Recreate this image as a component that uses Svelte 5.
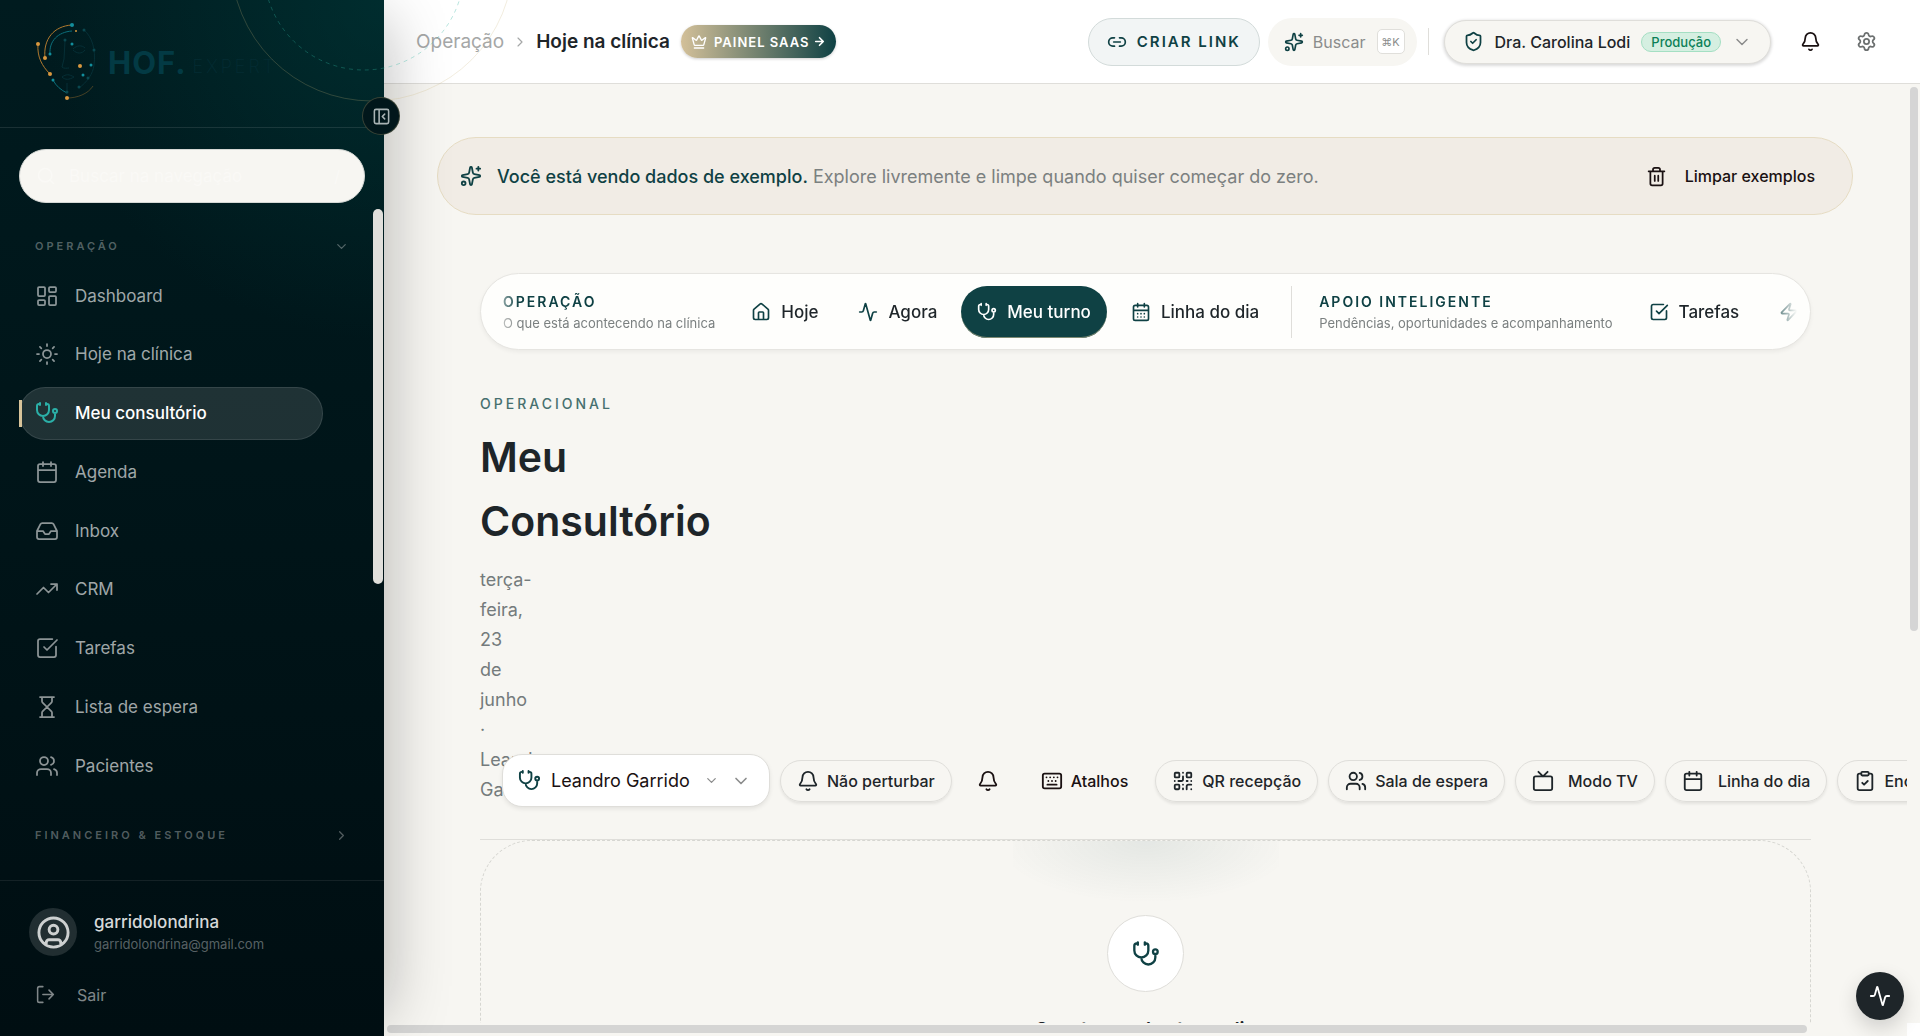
<script lang="ts">
  type IconName = keyof typeof icons;

  const icons = {
    dashboard: 'M4 3h5a1 1 0 0 1 1 1v7a1 1 0 0 1-1 1H4a1 1 0 0 1-1-1V4a1 1 0 0 1 1-1zM15 3h5a1 1 0 0 1 1 1v3a1 1 0 0 1-1 1h-5a1 1 0 0 1-1-1V4a1 1 0 0 1 1-1zM15 12h5a1 1 0 0 1 1 1v7a1 1 0 0 1-1 1h-5a1 1 0 0 1-1-1v-7a1 1 0 0 1 1-1zM4 16h5a1 1 0 0 1 1 1v3a1 1 0 0 1-1 1H4a1 1 0 0 1-1-1v-3a1 1 0 0 1 1-1z',
    sun: 'M8 12a4 4 0 1 0 8 0a4 4 0 1 0-8 0M12 2v2M12 20v2M4.93 4.93l1.41 1.41M17.66 17.66l1.41 1.41M2 12h2M20 12h2M6.34 17.66l-1.41 1.41M19.07 4.93l-1.41 1.41',
    stethoscope: 'M11 2v2M5 2v2M5 3H4a2 2 0 0 0-2 2v4a6 6 0 0 0 12 0V5a2 2 0 0 0-2-2h-1M8 15a6 6 0 0 0 12 0v-3M18 10a2 2 0 1 0 4 0a2 2 0 1 0-4 0',
    calendar: 'M8 2v4M16 2v4M5 4h14a2 2 0 0 1 2 2v14a2 2 0 0 1-2 2H5a2 2 0 0 1-2-2V6a2 2 0 0 1 2-2zM3 10h18',
    calendarDays: 'M8 2v4M16 2v4M5 4h14a2 2 0 0 1 2 2v14a2 2 0 0 1-2 2H5a2 2 0 0 1-2-2V6a2 2 0 0 1 2-2zM3 10h18M8 14h.01M12 14h.01M16 14h.01M8 18h.01M12 18h.01M16 18h.01',
    inbox: 'M22 12h-6l-2 3h-4l-2-3H2M5.45 5.11L2 12v6a2 2 0 0 0 2 2h16a2 2 0 0 0 2-2v-6l-3.45-6.89A2 2 0 0 0 16.76 4H7.24a2 2 0 0 0-1.79 1.11z',
    trending: 'M16 7h6v6M22 7l-8.5 8.5-5-5L2 17',
    check: 'M21 10.656V19a2 2 0 0 1-2 2H5a2 2 0 0 1-2-2V5a2 2 0 0 1 2-2h12.344M9 11l3 3L22 4',
    hourglass: 'M5 22h14M5 2h14M17 22v-4.172a2 2 0 0 0-.586-1.414L12 12l-4.414 4.414A2 2 0 0 0 7 17.828V22M7 2v4.172a2 2 0 0 0 .586 1.414L12 12l4.414-4.414A2 2 0 0 0 17 6.172V2',
    users: 'M16 21v-2a4 4 0 0 0-4-4H6a4 4 0 0 0-4 4v2M16 3.128a4 4 0 0 1 0 7.744M22 21v-2a4 4 0 0 0-3-3.87M5 7a4 4 0 1 0 8 0a4 4 0 1 0-8 0',
    user: 'M2 12a10 10 0 1 0 20 0a10 10 0 1 0-20 0M9 10a3 3 0 1 0 6 0a3 3 0 1 0-6 0M7 20.662V19a2 2 0 0 1 2-2h6a2 2 0 0 1 2 2v1.662',
    logout: 'M16 17l5-5-5-5M21 12H9M9 21H5a2 2 0 0 1-2-2V5a2 2 0 0 1 2-2h4',
    panel: 'M5 3h14a2 2 0 0 1 2 2v14a2 2 0 0 1-2 2H5a2 2 0 0 1-2-2V5a2 2 0 0 1 2-2zM9 3v18M16 15l-3-3 3-3',
    search: 'M3 11a8 8 0 1 0 16 0a8 8 0 1 0-16 0M21 21l-4.3-4.3',
    down: 'M6 9l6 6 6-6',
    right: 'M9 18l6-6-6-6',
    arrow: 'M5 12h14M12 5l7 7-7 7',
    crown: 'M11.562 3.266a.5.5 0 0 1 .876 0L15.39 8.87a1 1 0 0 0 1.516.294L21.183 5.5a.5.5 0 0 1 .798.519l-2.834 10.246a1 1 0 0 1-.956.734H5.81a1 1 0 0 1-.957-.734L2.02 6.02a.5.5 0 0 1 .798-.519l4.276 3.664a1 1 0 0 0 1.516-.294zM5 21h14',
    link: 'M9 17H7A5 5 0 0 1 7 7h2M15 7h2a5 5 0 1 1 0 10h-2M8 12h8',
    sparkles: 'M11.017 2.814a1 1 0 0 1 1.966 0l1.051 5.558a2 2 0 0 0 1.594 1.594l5.558 1.051a1 1 0 0 1 0 1.966l-5.558 1.051a2 2 0 0 0-1.594 1.594l-1.051 5.558a1 1 0 0 1-1.966 0l-1.051-5.558a2 2 0 0 0-1.594-1.594l-5.558-1.051a1 1 0 0 1 0-1.966l5.558-1.051a2 2 0 0 0 1.594-1.594zM20 2v4M22 4h-4M2 20a2 2 0 1 0 4 0a2 2 0 1 0-4 0',
    shield: 'M20 13c0 5-3.5 7.5-7.66 8.95a1 1 0 0 1-.67-.01C7.5 20.5 4 18 4 13V6a1 1 0 0 1 1-1c2 0 4.5-1.2 6.24-2.72a1.17 1.17 0 0 1 1.52 0C14.51 3.81 17 5 19 5a1 1 0 0 1 1 1zM9 12l2 2 4-4',
    bell: 'M10.268 21a2 2 0 0 0 3.464 0M3.262 15.326A1 1 0 0 0 4 17h16a1 1 0 0 0 .74-1.673C19.41 13.956 18 12.499 18 8A6 6 0 0 0 6 8c0 4.499-1.411 5.956-2.738 7.326',
    settings: 'M9.671 4.136a2.34 2.34 0 0 1 4.659 0 2.34 2.34 0 0 0 3.319 1.915 2.34 2.34 0 0 1 2.33 4.033 2.34 2.34 0 0 0 0 3.831 2.34 2.34 0 0 1-2.33 4.033 2.34 2.34 0 0 0-3.319 1.915 2.34 2.34 0 0 1-4.659 0 2.34 2.34 0 0 0-3.32-1.915 2.34 2.34 0 0 1-2.33-4.033 2.34 2.34 0 0 0 0-3.831A2.34 2.34 0 0 1 6.35 6.051a2.34 2.34 0 0 0 3.319-1.915M9 12a3 3 0 1 0 6 0a3 3 0 1 0-6 0',
    trash: 'M10 11v6M14 11v6M19 6v14a2 2 0 0 1-2 2H7a2 2 0 0 1-2-2V6M3 6h18M8 6V4a2 2 0 0 1 2-2h4a2 2 0 0 1 2 2v2',
    house: 'M15 21v-8a1 1 0 0 0-1-1h-4a1 1 0 0 0-1 1v8M3 10a2 2 0 0 1 .709-1.528l7-6a2 2 0 0 1 2.582 0l7 6A2 2 0 0 1 21 10v9a2 2 0 0 1-2 2H5a2 2 0 0 1-2-2z',
    activity: 'M22 12h-2.48a2 2 0 0 0-1.93 1.46l-2.35 8.36a.25.25 0 0 1-.48 0L9.24 2.18a.25.25 0 0 0-.48 0l-2.35 8.36A2 2 0 0 1 4.49 12H2',
    zap: 'M4 14a1 1 0 0 1-.78-1.63l9.9-10.2a.5.5 0 0 1 .86.46l-1.92 6.02A1 1 0 0 0 13 10h7a1 1 0 0 1 .78 1.63l-9.9 10.2a.5.5 0 0 1-.86-.46l1.92-6.02A1 1 0 0 0 11 14z',
    keyboard: 'M4 4h16a2 2 0 0 1 2 2v12a2 2 0 0 1-2 2H4a2 2 0 0 1-2-2V6a2 2 0 0 1 2-2zM6 8h.01M10 8h.01M14 8h.01M18 8h.01M8 12h.01M12 12h.01M16 12h.01M7 16h10',
    qr: 'M4 3h3a1 1 0 0 1 1 1v3a1 1 0 0 1-1 1H4a1 1 0 0 1-1-1V4a1 1 0 0 1 1-1zM17 3h3a1 1 0 0 1 1 1v3a1 1 0 0 1-1 1h-3a1 1 0 0 1-1-1V4a1 1 0 0 1 1-1zM4 16h3a1 1 0 0 1 1 1v3a1 1 0 0 1-1 1H4a1 1 0 0 1-1-1v-3a1 1 0 0 1 1-1zM21 16h-3a2 2 0 0 0-2 2v3M21 21v.01M12 7v3a2 2 0 0 1-2 2H7M3 12h.01M12 3h.01M12 16v.01M16 12h1M21 12v.01M12 21v-1',
    tv: 'M17 2l-5 5-5-5M4 7h16a2 2 0 0 1 2 2v11a2 2 0 0 1-2 2H4a2 2 0 0 1-2-2V9a2 2 0 0 1 2-2z',
    clipboard: 'M9 2h6a1 1 0 0 1 1 1v2a1 1 0 0 1-1 1H9a1 1 0 0 1-1-1V3a1 1 0 0 1 1-1zM16 4h2a2 2 0 0 1 2 2v14a2 2 0 0 1-2 2H6a2 2 0 0 1-2-2V6a2 2 0 0 1 2-2h2M9 14l2 2 4-4',
  };

  const navItems: { label: string; icon: IconName }[] = [
    { label: 'Dashboard', icon: 'dashboard' },
    { label: 'Hoje na clínica', icon: 'sun' },
    { label: 'Meu consultório', icon: 'stethoscope' },
    { label: 'Agenda', icon: 'calendar' },
    { label: 'Inbox', icon: 'inbox' },
    { label: 'CRM', icon: 'trending' },
    { label: 'Tarefas', icon: 'check' },
    { label: 'Lista de espera', icon: 'hourglass' },
    { label: 'Pacientes', icon: 'users' },
  ];

  const tabs: { label: string; icon: IconName }[] = [
    { label: 'Hoje', icon: 'house' },
    { label: 'Agora', icon: 'activity' },
    { label: 'Meu turno', icon: 'stethoscope' },
    { label: 'Linha do dia', icon: 'calendarDays' },
  ];

  const supportTabs: { label: string; icon: IconName }[] = [
    { label: 'Tarefas', icon: 'check' },
    { label: 'Oportunidades', icon: 'zap' },
  ];

  const actions: { label: string; icon: IconName; kind: string }[] = [
    { label: 'Não perturbar', icon: 'bell', kind: 'outline' },
    { label: '', icon: 'bell', kind: 'bare' },
    { label: 'Atalhos', icon: 'keyboard', kind: 'ghost' },
    { label: 'QR recepção', icon: 'qr', kind: 'outline' },
    { label: 'Sala de espera', icon: 'users', kind: 'outline' },
    { label: 'Modo TV', icon: 'tv', kind: 'outline wide' },
    { label: 'Linha do dia', icon: 'calendar', kind: 'outline wide' },
    { label: 'Encerrar turno', icon: 'clipboard', kind: 'outline' },
  ];

  let activeNav = $state('Meu consultório');
  let activeTab = $state('Meu turno');
  let query = $state('');
</script>

{#snippet icon(name: IconName, size = 20, stroke = 2)}
  <svg class="icon" width={size} height={size} viewBox="0 0 24 24" stroke-width={stroke} aria-hidden="true">
    <path d={icons[name]} />
  </svg>
{/snippet}

{#snippet tab(item: { label: string; icon: IconName })}
  <button class="tab" class:active={item.label === activeTab} onclick={() => (activeTab = item.label)}>
    {@render icon(item.icon, 20, 2)}
    {item.label}
  </button>
{/snippet}

<div class="app">
  <aside class="sidebar">
    <svg class="orbits" width="320" height="120" viewBox="0 0 320 120" aria-hidden="true">
      <circle cx="156" cy="-40" r="141" stroke="#c9b27a" stroke-opacity="0.24" />
      <circle cx="148" cy="-30" r="100" stroke="#2fb39f" stroke-opacity="0.34" stroke-dasharray="4 4" />
    </svg>

    <div class="brand">
      <svg class="face" width="64" height="80" viewBox="0 0 64 80" aria-hidden="true">
        <g stroke="#b0792e">
          <path d="M37 3C19 4 8 17 10 36" />
          <path d="M3 22C2 35 7 44 15 52" />
          <path d="M32 76C42 76 53 72 58 64" opacity="0.4" />
        </g>
        <g stroke="#0c6f7b">
          <path d="M37 9C23 10 14 19 15 32" />
          <path d="M18 58C21 64 26 68 32 71" />
        </g>
        <g stroke="#062f36">
          <path d="M49 8C57 15 61 27 59 43C58 52 52 60 44 66" />
          <path d="M38 28C42 32 47 32 50 28M38 27C42 23 47 23 50 26" />
          <path d="M30 19L29 37L27 45C29 47 32 46 34 46" />
          <path d="M27 55C31 52 34 52 39 55C34 58 30 58 27 55M32 61V70" />
        </g>
        <g fill="#d9983f" stroke="none">
          <circle cx="3" cy="22" r="2" /><circle cx="10" cy="36" r="2" />
          <circle cx="15" cy="52" r="2" /><circle cx="32" cy="76" r="2" />
          <circle cx="45" cy="44" r="2" /><circle cx="41" cy="9" r="1" />
        </g>
        <g fill="#128e9c" stroke="none">
          <circle cx="37" cy="3" r="2" /><circle cx="37" cy="22" r="1.5" />
          <circle cx="15" cy="32" r="1.5" /><circle cx="18" cy="58" r="1.5" />
          <circle cx="56" cy="43" r="1.5" /><circle cx="48" cy="53" r="1.5" />
        </g>
        <g fill="#0a474f" stroke="none">
          <circle cx="49" cy="8" r="1.5" /><circle cx="59" cy="28" r="1.5" />
          <circle cx="30" cy="18" r="1.5" /><circle cx="53" cy="56" r="1.5" />
          <circle cx="44" cy="65" r="1.5" /><circle cx="32" cy="70" r="1.5" />
        </g>
      </svg>
      <span class="wordmark">HOF.</span>
      <span class="submark">EXPERT</span>
    </div>

    <button class="collapse" aria-label="Recolher menu">{@render icon('panel', 19, 2)}</button>

    <label class="nav-search">
      {@render icon('search', 20, 1.75)}
      <input type="text" placeholder="Buscar na navegação" aria-label="Buscar na navegação" bind:value={query} />
      <span>/</span>
    </label>

    <div class="nav-area">
      <button class="section">OPERAÇÃO {@render icon('down', 15, 2)}</button>
      <nav>
        {#each navItems as item}
          <a
            href="#{item.icon}"
            class:active={item.label === activeNav}
            onclick={() => (activeNav = item.label)}
          >
            {@render icon(item.icon, 24, 1.75)}
            {item.label}
          </a>
        {/each}
      </nav>
      <button class="section">FINANCEIRO &amp; ESTOQUE {@render icon('right', 15, 2)}</button>
      <div class="nav-thumb"></div>
    </div>

    <div class="account">
      <div class="user">
        <span class="avatar">{@render icon('user', 35, 2)}</span>
        <div>
          <div class="user-name">garridolondrina</div>
          <div class="user-email">garridolondrina@gmail.com</div>
        </div>
      </div>
      <button class="logout">{@render icon('logout', 21, 1.75)} Sair</button>
    </div>
  </aside>

  <div class="page">
    <header class="topbar">
      <div class="crumbs">
        <a href="#operacao">Operação</a>
        {@render icon('right', 16, 1.75)}
        <strong>Hoje na clínica</strong>
        <button class="saas">{@render icon('crown', 16, 2)} PAINEL SAAS {@render icon('arrow', 13, 3)}</button>
      </div>
      <div class="tools">
        <button class="create">{@render icon('link', 20, 2)} CRIAR LINK</button>
        <button class="find">{@render icon('sparkles', 20, 2)} Buscar <kbd>⌘K</kbd></button>
        <span class="rule"></span>
        <button class="profile">
          {@render icon('shield', 21, 2)}
          Dra. Carolina Lodi
          <span class="env">Produção</span>
          {@render icon('down', 20, 1.75)}
        </button>
        <button class="round" aria-label="Notificações">{@render icon('bell', 21, 2)}</button>
        <button class="round muted" aria-label="Configurações">{@render icon('settings', 21, 2)}</button>
      </div>
    </header>

    <div class="viewport">
      <main>
        <section class="banner">
          {@render icon('sparkles', 22, 2)}
          <p><strong>Você está vendo dados de exemplo.</strong> Explore livremente e limpe quando quiser começar do zero.</p>
          <button>{@render icon('trash', 21, 2)} Limpar exemplos</button>
        </section>

        <div class="content">
          <div class="tabs">
            <div class="tabs-scroll">
              <div class="group">
                <b>OPERAÇÃO</b>
                <span>O que está acontecendo na clínica</span>
              </div>
              {#each tabs as item}
                {@render tab(item)}
              {/each}
              <span class="tabs-rule"></span>
              <div class="group">
                <b>APOIO INTELIGENTE</b>
                <span>Pendências, oportunidades e acompanhamento</span>
              </div>
              {#each supportTabs as item}
                {@render tab(item)}
              {/each}
            </div>
          </div>

          <div class="head">
            <div class="title">
              <div class="eyebrow">OPERACIONAL</div>
              <h1>Meu Consultório</h1>
              <p>terça-feira, 23 de junho · Leandro Garrido</p>
            </div>
            <div class="toolbar">
              <label class="doctor">
                {@render icon('stethoscope', 23, 2)}
                <select aria-label="Profissional">
                  <option>Leandro Garrido</option>
                </select>
                {@render icon('down', 15, 2)}
                {@render icon('down', 20, 2)}
              </label>
              {#each actions as action}
                <button class="action {action.kind}" aria-label={action.label || 'Avisos'}>
                  {@render icon(action.icon, 22, 2)}
                  {action.label}
                </button>
              {/each}
            </div>
          </div>

          <section class="empty">
            <span class="empty-icon">{@render icon('stethoscope', 28, 2)}</span>
            <h2>Sem turno aberto no dia</h2>
          </section>
        </div>
      </main>
    </div>
    <div class="thumb-y"></div>
    <div class="thumb-x"></div>
    <div class="corner"></div>
    <button class="pulse" aria-label="Atividade">{@render icon('activity', 22, 2)}</button>
  </div>
</div>

<style>
  :global(body) {
    margin: 0;
    overflow: hidden;
  }

  .app {
    display: grid;
    grid-template-columns: 384px minmax(0, 1fr);
    height: 100vh;
    font-family: Inter, sans-serif;
    color: #1e2529;
  }

  .app * {
    box-sizing: border-box;
  }

  button {
    display: flex;
    align-items: center;
    padding: 0;
    border: none;
    background: none;
    font: inherit;
    color: inherit;
    white-space: nowrap;
    cursor: pointer;
  }

  a {
    color: inherit;
    text-decoration: none;
  }

  .icon {
    flex: none;
    fill: none;
    stroke: currentColor;
    stroke-linecap: round;
    stroke-linejoin: round;
  }

  /* Sidebar */
  .sidebar {
    position: relative;
    z-index: 2;
    display: flex;
    flex-direction: column;
    min-height: 0;
    background:
      radial-gradient(circle at 100% 0, rgba(0, 72, 70, 0.4), transparent 340px),
      linear-gradient(180deg, #001b1f 0%, #001519 45%, #000e12 100%);
    box-shadow: 20px 0 60px -20px rgba(10, 10, 10, 0.3);
  }

  .orbits {
    position: absolute;
    top: 0;
    left: 216px;
    fill: none;
    pointer-events: none;
  }

  .brand {
    display: flex;
    flex: none;
    align-items: center;
    height: 128px;
    padding: 0 35px 3px;
    border-bottom: 1px solid rgba(255, 255, 255, 0.1);
  }

  .face {
    flex: none;
    margin-right: 9px;
    fill: none;
  }

  .wordmark {
    color: #033a44;
    font-size: 31px;
    font-weight: 700;
    letter-spacing: 1px;
  }

  .submark {
    margin-left: 6px;
    padding-top: 8px;
    color: #042c33;
    font-size: 18px;
    font-weight: 200;
    letter-spacing: 3px;
  }

  .collapse {
    position: absolute;
    top: 97px;
    right: -16px;
    justify-content: center;
    width: 38px;
    height: 38px;
    border: 1px solid rgba(201, 178, 122, 0.28);
    border-radius: 50%;
    background: #01171b;
    color: #a9b3b4;
  }

  .nav-search {
    display: flex;
    flex: none;
    align-items: center;
    gap: 13px;
    height: 54px;
    margin: 21px 19px 0;
    padding: 0 24px 0 16px;
    border: 1px solid #d5d8d5;
    border-radius: 27px;
    background: #f7f6f2;
    color: #faf9f6;
  }

  .nav-search input {
    flex: 1;
    min-width: 0;
    padding: 0;
    border: none;
    outline: none;
    background: none;
    color: #1e2529;
    font: 17px Inter, sans-serif;
  }

  .nav-search input::placeholder {
    color: #faf9f6;
    opacity: 1;
  }

  .nav-area {
    position: relative;
    flex: 1;
    min-height: 0;
    overflow: hidden;
    padding: 32px 35px 0 19px;
  }

  .nav-thumb {
    position: absolute;
    top: 6px;
    right: 1px;
    width: 10px;
    height: 375px;
    border-radius: 5px;
    background: #e0dfdb;
  }

  .section {
    justify-content: space-between;
    width: 100%;
    height: 22px;
    padding: 0 0 0 16px;
    color: rgba(255, 255, 255, 0.32);
    font-size: 11px;
    font-weight: 600;
    letter-spacing: 3px;
  }

  nav {
    display: flex;
    flex-direction: column;
    justify-content: space-between;
    width: 304px;
    height: 523px;
    margin: 12px 0 32px;
  }

  nav a {
    position: relative;
    display: flex;
    align-items: center;
    gap: 16px;
    height: 53px;
    padding: 0 15px;
    border: 1px solid transparent;
    border-radius: 27px;
    color: rgba(255, 255, 255, 0.64);
    font-size: 17px;
  }

  nav a .icon {
    color: rgba(255, 255, 255, 0.55);
  }

  nav a.active {
    border-color: rgba(255, 255, 255, 0.1);
    background: rgba(255, 255, 255, 0.12);
    color: #fff;
    font-weight: 500;
  }

  nav a.active .icon {
    color: #2bb0a8;
    stroke-width: 2;
  }

  nav a.active::before {
    content: '';
    position: absolute;
    top: 12px;
    left: -1px;
    width: 3px;
    height: 27px;
    background: #d8c49a;
  }

  .account {
    flex: none;
    height: 156px;
    padding: 27px 29px 0;
    border-top: 1px solid rgba(255, 255, 255, 0.08);
  }

  .user {
    display: flex;
    align-items: center;
    gap: 17px;
  }

  .avatar {
    display: grid;
    place-items: center;
    width: 48px;
    height: 48px;
    border-radius: 50%;
    background: rgba(255, 255, 255, 0.13);
    color: #cdd0d0;
  }

  .user-name {
    color: rgba(255, 255, 255, 0.85);
    font-size: 17px;
    font-weight: 500;
    line-height: 24px;
  }

  .user-email {
    color: rgba(255, 255, 255, 0.35);
    font-size: 13px;
    line-height: 20px;
  }

  .logout {
    gap: 21px;
    margin-top: 28px;
    padding-left: 6px;
    color: rgba(255, 255, 255, 0.5);
    font-size: 16px;
  }

  /* Top bar */
  .page {
    position: relative;
    display: flex;
    flex-direction: column;
    min-width: 0;
    min-height: 0;
    background: #f7f6f2;
  }

  .topbar {
    display: flex;
    flex: none;
    align-items: center;
    justify-content: space-between;
    height: 84px;
    padding: 0 32px;
    border-bottom: 1px solid #dfdeda;
    background: #fff;
  }

  .crumbs,
  .tools {
    display: flex;
    align-items: center;
  }

  .crumbs {
    color: #a5a7a7;
    font-size: 19px;
  }

  .crumbs .icon {
    margin: 0 8px;
  }

  .crumbs strong {
    color: #1e2529;
    font-size: 19px;
    font-weight: 600;
  }

  .crumbs .saas {
    height: 33px;
    margin-left: 11px;
    padding: 0 10px;
    border-radius: 17px;
    background: linear-gradient(90deg, #d3c099, #0f4144);
    box-shadow: 0 1px 3px rgba(0, 0, 0, 0.2);
    color: #fff;
    font-size: 13px;
    font-weight: 600;
    letter-spacing: 1px;
  }

  .crumbs .saas .icon {
    margin: 0 7px 0 0;
  }

  .crumbs .saas .icon:last-child {
    margin: 0 0 0 3px;
  }

  .create {
    gap: 10px;
    height: 48px;
    padding: 0 18px;
    border: 1px solid #d3dbda;
    border-radius: 24px;
    background: #f2f5f5;
    color: #0f4144;
    font-size: 15px;
    font-weight: 600;
    letter-spacing: 2px;
  }

  .find {
    gap: 9px;
    height: 48px;
    margin-left: 8px;
    padding: 0 12px 0 16px;
    border-radius: 24px;
    background: #f7f6f2;
    color: #8b8c8c;
    font-size: 16px;
  }

  .find .icon,
  .profile .icon:first-child {
    color: #0f4144;
  }

  kbd {
    display: grid;
    place-items: center;
    width: 28px;
    height: 25px;
    margin-left: 2px;
    border: 1px solid #e0dfdb;
    border-radius: 5px;
    background: #fff;
    font-family: Inter, sans-serif;
    font-size: 11px;
  }

  .rule {
    width: 1px;
    height: 27px;
    margin: 0 15px 0 11px;
    background: #dfdeda;
  }

  .profile {
    gap: 11px;
    height: 44px;
    padding: 0 18px;
    border: 1px solid #dfdeda;
    border-radius: 22px;
    background: #f7f6f2;
    box-shadow: 0 1px 3px 1px rgba(0, 0, 0, 0.14);
    color: #1e2529;
    font-size: 16px;
    font-weight: 500;
  }

  .profile .icon:last-child {
    color: #8b8c8c;
  }

  .env {
    padding: 0 9px;
    border: 1px solid #a4dfc3;
    border-radius: 10px;
    background: #d5efe1;
    color: #0c8057;
    font-size: 13px;
    line-height: 18px;
  }

  .round {
    justify-content: center;
    width: 44px;
    height: 44px;
    margin-left: 17px;
    color: #1a1112;
  }

  .round.muted {
    margin-left: 12px;
    color: #6c7070;
  }

  .viewport {
    flex: 1;
    min-height: 0;
    margin: 0 13px 13px 0;
    overflow: hidden;
  }

  main {
    padding: 53px 54px 0 53px;
  }

  .banner {
    display: flex;
    align-items: center;
    height: 78px;
    padding: 0 37px 0 22px;
    border: 1px solid #e6dcc3;
    border-radius: 39px;
    background: #f1ece5;
    color: #0f4144;
  }

  .banner p {
    flex: 1;
    margin: 0 0 0 15px;
    color: #7b8080;
    font-size: 18px;
  }

  .banner strong {
    color: #0f4144;
    font-weight: 500;
  }

  .banner button {
    gap: 18px;
    color: #1a1112;
    font-size: 16px;
    font-weight: 500;
  }

  .content {
    padding: 58px 42px 0 43px;
  }

  .tabs {
    height: 77px;
    padding: 12px 13px 0 22px;
    border: 1px solid #e6e5e1;
    border-radius: 39px;
    background: #fefefc;
    box-shadow: 0 2px 4px rgba(0, 0, 0, 0.05);
  }

  .tabs-scroll {
    display: flex;
    align-items: center;
    gap: 8px;
    overflow: hidden;
    mask-image: linear-gradient(90deg, rgba(0, 0, 0, 0.5), #000 16px, #000 calc(100% - 28px), transparent);
  }

  .group {
    flex: none;
    margin-right: 12px;
    white-space: nowrap;
  }

  .group b {
    display: block;
    color: #0f4144;
    font-size: 14px;
    font-weight: 600;
    letter-spacing: 2px;
    line-height: 21px;
  }

  .group span {
    color: #7b8080;
    font-size: 13px;
    line-height: 20px;
  }

  .tab {
    flex: none;
    gap: 10px;
    height: 52px;
    padding: 0 16px;
    border-radius: 26px;
    font-size: 17px;
    font-weight: 500;
  }

  .tab .icon {
    color: #0f4144;
  }

  .tab.active {
    background: #0f4144;
    box-shadow: inset 0 -1px 0 #7e8a73;
    color: #fff;
  }

  .tab.active .icon {
    color: #fff;
  }

  .tabs-rule {
    flex: none;
    width: 1px;
    height: 52px;
    margin: 0 19px 0 8px;
    background: #dfdeda;
  }

  .head {
    display: flex;
    align-items: flex-end;
    gap: 22px;
    padding: 42px 0 32px;
    border-bottom: 1px solid #dfdeda;
  }

  .title {
    flex: none;
    width: 0;
  }

  .eyebrow {
    color: #46706f;
    font-size: 14px;
    font-weight: 500;
    letter-spacing: 3px;
    line-height: 24px;
  }

  h1 {
    margin: 9px 0 0;
    font-size: 41px;
    font-weight: 600;
    line-height: 64px;
  }

  .title p {
    margin: 12px 0 2px;
    color: #747b7c;
    font-size: 18px;
    line-height: 30px;
  }

  .toolbar {
    display: flex;
    align-items: center;
    gap: 10px;
  }

  .doctor {
    display: flex;
    flex: none;
    align-items: center;
    height: 53px;
    padding: 0 18px 0 15px;
    border: 1px solid #dfdeda;
    border-radius: 20px;
    background: #fff;
    box-shadow: 0 2px 4px rgba(0, 0, 0, 0.08);
    color: #8b8c8c;
  }

  .doctor .icon:first-child {
    color: #0f4144;
  }

  .doctor select {
    margin: 0 14px 0 10px;
    padding: 0;
    appearance: none;
    border: none;
    outline: none;
    background: none;
    color: #1a1112;
    font: 18px Inter, sans-serif;
  }

  .doctor .icon:last-child {
    margin-left: 12px;
  }

  .action {
    flex: none;
    gap: 8px;
    height: 42px;
    padding: 0 16px;
    border: 1px solid transparent;
    border-radius: 21px;
    color: #1a1112;
    font-size: 16px;
    font-weight: 500;
  }

  .action.outline {
    border-color: #dfdeda;
    box-shadow: 0 2px 3px rgba(0, 0, 0, 0.08);
    color: #1e2529;
  }

  .action.wide {
    gap: 14px;
  }

  .action.bare {
    gap: 0;
    padding: 0 14px;
  }

  .empty {
    display: flex;
    flex-direction: column;
    align-items: center;
    height: 420px;
    padding-top: 74px;
    border: 1px dashed #d6d6d1;
    border-radius: 52px;
    background: radial-gradient(ellipse 150px 62px at 50% 0, rgba(15, 65, 68, 0.08), transparent) 50% 0 / 266px 64px no-repeat;
  }

  .empty-icon {
    display: grid;
    flex: none;
    place-items: center;
    width: 77px;
    height: 77px;
    border: 1px solid #dfdeda;
    border-radius: 50%;
    background: #fff;
    color: #0f4144;
  }

  h2 {
    margin: 22px 0 0;
    font-size: 19px;
    font-weight: 600;
    line-height: 32px;
  }

  .thumb-y,
  .thumb-x,
  .corner,
  .pulse {
    position: absolute;
  }

  .thumb-y {
    top: 87px;
    right: 2px;
    width: 8px;
    height: 544px;
    border-radius: 4px;
    background: #d5d5d5;
  }

  .thumb-x {
    right: 113px;
    bottom: 3px;
    left: 3px;
    height: 8px;
    border-radius: 4px;
    background: #d5d5d4;
  }

  .corner {
    right: 0;
    bottom: 0;
    width: 13px;
    height: 13px;
    background: #fff;
  }

  .pulse {
    right: 16px;
    bottom: 16px;
    justify-content: center;
    width: 48px;
    height: 48px;
    border-radius: 50%;
    background: #1e2529;
    box-shadow: 0 8px 20px rgba(0, 0, 0, 0.16);
    color: #fff;
  }
</style>
